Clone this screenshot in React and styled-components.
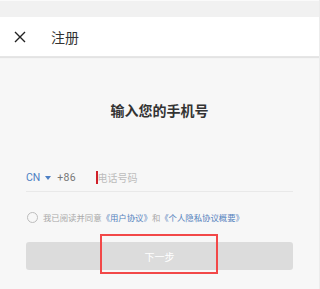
import styled, { createGlobalStyle } from 'styled-components';

const GlobalStyle = createGlobalStyle`
  html, body {
    margin: 0;
    padding: 0;
    background: #f7f7f7;
  }
  body {
    font-family: Roboto, "Noto Sans CJK SC", sans-serif;
  }
`;

export default function App() {
  return (
    <Page>
      <GlobalStyle />
      <StatusStrip />
      <Header>
        <CloseButton aria-label="close">
          <svg width="12" height="12" viewBox="0 0 12 12">
            <path d="M1 1L11 11M11 1L1 11" stroke="#222" strokeWidth="1.4" fill="none" />
          </svg>
        </CloseButton>
        <HeaderTitle>注册</HeaderTitle>
      </Header>
      <Main>
        <Heading>输入您的手机号</Heading>
        <PhoneRow>
          <Country>CN</Country>
          <Caret />
          <Prefix>+86</Prefix>
          <Cursor />
          <PhoneInput placeholder="电话号码" />
        </PhoneRow>
        <Agreement>
          <Radio />
          <span>我已阅读并同意</span>
          <AgreeLink>《用户协议》</AgreeLink>
          <span>和</span>
          <AgreeLink>《个人隐私协议概要》</AgreeLink>
        </Agreement>
        <ButtonWrap>
          <NextButton disabled>下一步</NextButton>
          <Highlight />
        </ButtonWrap>
      </Main>
    </Page>
  );
}

const Page = styled.div`
  width: 320px;
  height: 289px;
  background: #f7f7f7;
  border-right: 1px solid #ececec;
  box-sizing: border-box;
  overflow: hidden;
`;

const StatusStrip = styled.div`
  height: 17px;
  background: #f1f1f1;
  border-top: 1px solid #fafafa;
  box-sizing: border-box;
`;

const Header = styled.header`
  height: 40px;
  background: #fff;
  display: flex;
  align-items: center;
  padding-left: 14px;
  box-shadow: 0 1px 1px rgba(0, 0, 0, 0.08);
  border-bottom: 1px solid #e6e6e6;
  box-sizing: border-box;
`;

const CloseButton = styled.div`
  width: 12px;
  height: 12px;
  display: flex;
`;

const HeaderTitle = styled.div`
  margin-left: 25px;
  font-size: 14px;
  color: #333;
  line-height: 20px;
  font-family: "Noto Sans CJK SC", sans-serif;
`;

const Main = styled.main`
  padding: 0 26px;
  display: flex;
  flex-direction: column;
`;

const Heading = styled.h1`
  margin: 43px 0 0;
  text-align: center;
  font-size: 14px;
  line-height: 20px;
  font-weight: 700;
  color: #333;
  font-family: "Noto Sans CJK SC", sans-serif;
`;

const PhoneRow = styled.div`
  margin-top: 44px;
  height: 28px;
  display: flex;
  align-items: center;
  border-bottom: 1px solid #e9e9e9;
  box-sizing: border-box;
`;

const Country = styled.span`
  font-size: 10.5px;
  color: #4d7fc4;
`;

const Caret = styled.span`
  margin-left: 5px;
  width: 0;
  height: 0;
  border-left: 3px solid transparent;
  border-right: 3px solid transparent;
  border-top: 4px solid #4d7fc4;
`;

const Prefix = styled.span`
  margin-left: 6px;
  font-size: 10.5px;
  color: #777;
  letter-spacing: 0.3px;
`;

const Cursor = styled.span`
  margin-left: 20px;
  width: 1.5px;
  height: 13px;
  background: #d0202a;
`;

const PhoneInput = styled.input`
  flex: 1;
  border: none;
  outline: none;
  background: transparent;
  padding: 0;
  font-size: 10px;
  font-family: "Noto Sans CJK SC", sans-serif;
  color: #333;
  &::placeholder {
    color: #bcbcbc;
  }
`;

const Agreement = styled.div`
  margin-top: 19px;
  height: 12px;
  display: flex;
  align-items: center;
  font-size: 8.4px;
  color: #a9a9a9;
  font-family: "Noto Sans CJK SC", sans-serif;
  white-space: nowrap;
`;

const Radio = styled.span`
  width: 9px;
  height: 9px;
  border: 1px solid #bdbdbd;
  border-radius: 50%;
  margin-left: 1px;
  margin-right: 5px;
`;

const AgreeLink = styled.span`
  color: #5582bd;
`;

const ButtonWrap = styled.div`
  position: relative;
  margin-top: 19px;
`;

const NextButton = styled.button`
  width: 100%;
  height: 28px;
  border: none;
  border-radius: 3px;
  background: #dcdcdc;
  color: #fff;
  font-size: 10px;
  font-family: "Noto Sans CJK SC", sans-serif;
  padding: 0;
`;

const Highlight = styled.div`
  position: absolute;
  left: 74px;
  top: -8px;
  width: 118px;
  height: 40px;
  border: 2px solid #f24848;
  box-sizing: border-box;
  pointer-events: none;
`;
